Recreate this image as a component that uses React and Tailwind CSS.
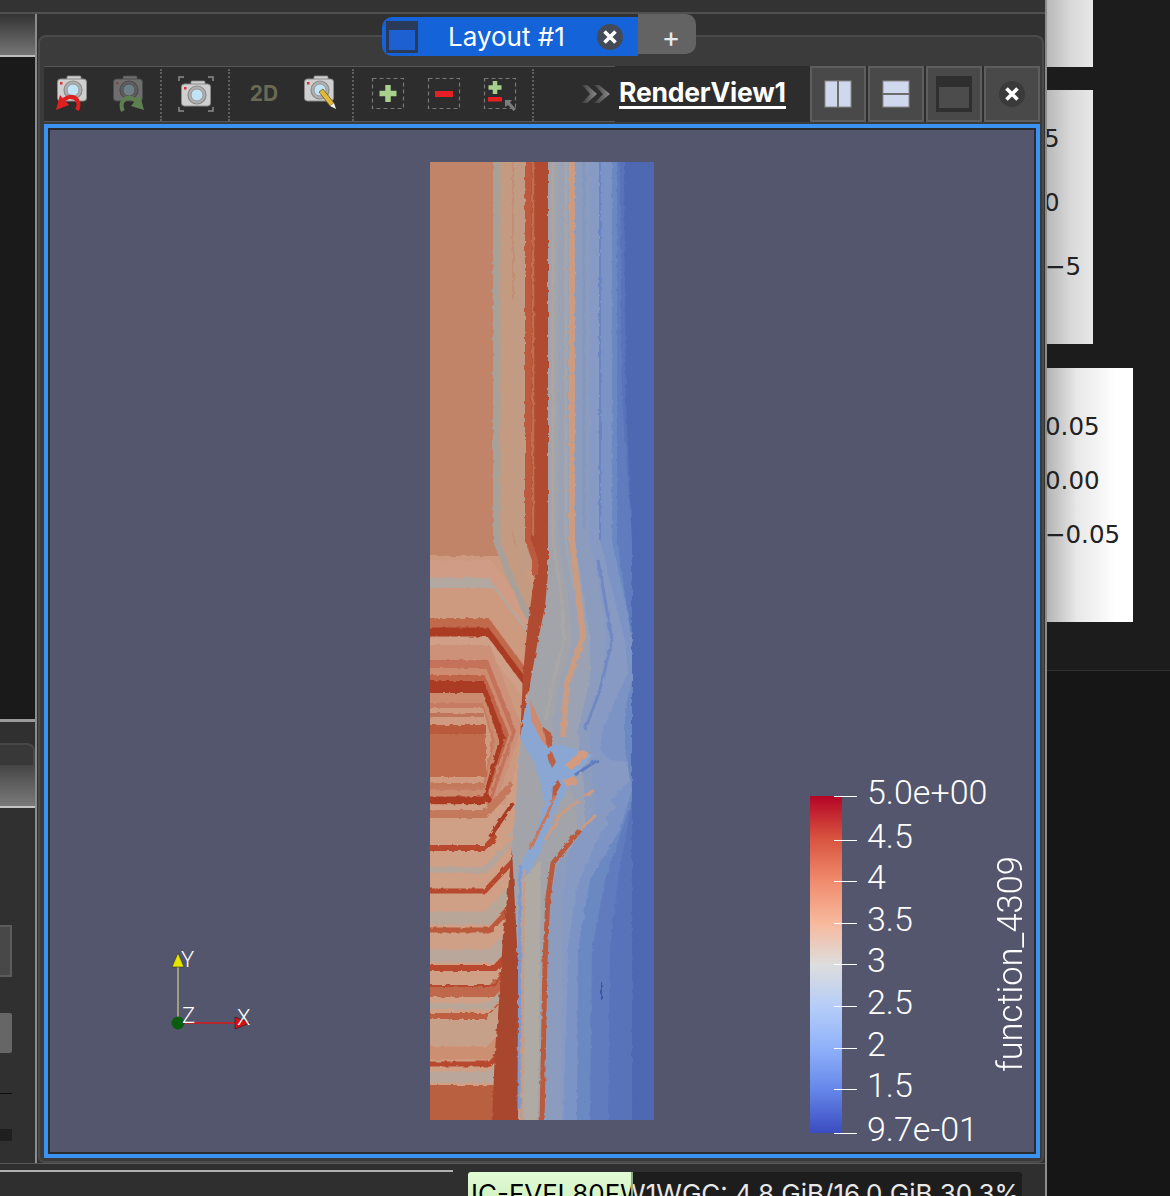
import React from "react";

// field bands of the render view, in page coordinates (x 430-654, y 162-1120)
const toRight = (pts) => pts.map((p) => p.join(",")).join(" ") + " 660,1125 660,155";

const rightBands = [
  { c: "#a2a4aa", p: [[548,155],[548,573],[545,607],[538,640],[532,673],[528,697],[524,720],[518,760],[516,800],[512,850],[520,1000],[520,1125]] },
  { c: "#9aa2b4", p: [[558,155],[558,540],[568,600],[572,640],[560,680],[552,720],[556,760],[575,800],[578,830],[552,865],[547,900],[544,963],[541,1125]] },
  { c: "#8b9cbe", p: [[575,155],[575,540],[590,640],[590,680],[578,730],[585,800],[585,830],[557,865],[551,897],[548,963],[545,1125]] },
  { c: "#869ac3", p: [[590,155],[590,540],[605,620],[605,680],[590,730],[595,810],[570,850],[563,900],[561,1125]] },
  { c: "#7c93c6", p: [[600,155],[600,540],[615,600],[625,640],[628,673],[617,697],[603,730],[600,750],[610,760],[630,762],[630,780],[610,800],[617,807],[605,817],[608,823],[597,840],[577,887],[568,947],[567,997],[563,1125]] },
  { c: "#6a88c2", p: [[612,155],[612,540],[625,600],[632,640],[632,680],[625,710],[625,750],[632,790],[620,830],[590,880],[578,950],[577,1125]] },
  { c: "#607cbe", p: [[617,155],[617,540],[632,640],[632,800],[605,880],[592,950],[590,1125]] },
  { c: "#5873b9", p: [[620,155],[622,400],[632,540],[632,800],[618,880],[610,950],[608,1125]] },
  { c: "#4f67b2", p: [[624,155],[626,400],[632,540],[632,1125]] },
];

const upperStripes = [
  [569, 18, "#d09c85"], [583, 11, "#b2a89f"], [603, 30, "#cd9a7f"],
  [623, 10, "#c16a4c"], [632, 9, "#ab3a22"], [641, 8, "#cf9f88"],
];

const lowerStripes = [
  [814, 8, "#c4785c", 485], [848, 6, "#b8492f", 485], [870, 6, "#b5a59a", 485],
  [891, 5, "#b8492f", 485], [918, 13, "#b8a698", 488], [930, 5, "#bc5a3c", 490],
  [956, 13, "#b9a79b", 492], [968, 6, "#b8492f", 495], [991, 12, "#c0674b", 492],
  [986, 2, "#b8492f", 492], [1006, 6, "#b8a698", 490], [1016, 6, "#bf5f43", 490],
  [1033, 26, "#c7a08a", 490], [1053, 13, "#cd8f72", 490], [1064, 5, "#b8492f", 490],
  [1077, 11, "#b9a79b", 490],
];

const chevrons = [
  [645, 820, 490, 522, "#cc9178"], [660, 812, 488, 516, "#c4735a"],
  [668, 808, 486, 512, "#cd8b70"], [675, 804, 485, 509, "#c0654a"],
  [681, 804, 484, 505, "#ab3a22"], [693, 797, 483, 499, "#cc8a6e"],
  [703, 790, 483, 495, "#c67c60"], [708, 785, 483, 492, "#cf9a80"],
];

function Field() {
  return (
    <svg viewBox="430 162 224 958" className="absolute left-[380px] top-[32px] h-[958px] w-[224px]">
      <defs>
        <filter id="rough" x="400" y="130" width="290" height="1020" filterUnits="userSpaceOnUse">
          <feTurbulence type="fractalNoise" baseFrequency="0.17" numOctaves="2" seed="4" />
          <feDisplacementMap in="SourceGraphic" scale="3.5" />
          <feGaussianBlur stdDeviation="0.7" />
        </filter>
        <clipPath id="plotClip">
          <rect x="430" y="162" width="224" height="958" />
        </clipPath>
      </defs>
      <g clipPath="url(#plotClip)">
        <g filter="url(#rough)">
          <rect x="420" y="150" width="240" height="420" fill="#c18469" />
          <rect x="420" y="556" width="240" height="260" fill="#cd9a80" />
          <rect x="420" y="805" width="240" height="320" fill="#cf9f86" />

          {upperStripes.map(([y, w, c]) => (
            <polyline key={y} points={`420,${y} 486,${y} 535,${y + 66}`} fill="none" stroke={c} strokeWidth={w} />
          ))}

          {/* columns on top that bend into the red band */}
          <polyline points="497,150 497,540 508,570 530,618" fill="none" stroke="#a9a199" strokeWidth="8" />
          <polyline points="507,150 507,540 518,570 533,605" fill="none" stroke="#c49a80" strokeWidth="13" />
          <polyline points="519,150 519,530 528,570" fill="none" stroke="#c29b84" strokeWidth="12" />
          <polyline points="513,162 513,300" fill="none" stroke="#c58a6e" strokeWidth="1.5" />

          {chevrons.map(([t, b, bx, tip, c]) => (
            <polygon key={t} points={`420,${t} ${bx},${t} ${tip},${(t + b) / 2 - 5} ${bx},${b} 420,${b}`} fill={c} />
          ))}
          <rect x="420" y="713" width="64" height="4" fill="#c0745a" />
          <rect x="420" y="725" width="66" height="52" fill="#c06c4e" />
          <rect x="420" y="725" width="66" height="9" fill="#b95a3e" />
          <rect x="420" y="783" width="64" height="5" fill="#c4785c" />

          {/* chevrons running up to the wedge */}
          <rect x="420" y="805" width="90" height="320" fill="#cf9f86" />
          {lowerStripes.map(([y, w, c, bx]) => (
            <polyline key={y} points={`420,${y} ${bx},${y} ${bx + 28},${y - 30}`} fill="none" stroke={c} strokeWidth={w} />
          ))}
          <polyline points="420,800 484,800 490,797" fill="none" stroke="#ab3a22" strokeWidth="7" />
          <rect x="420" y="1085" width="74" height="40" fill="#b8603f" />

          <polygon points="520,745 537,765 537,800 514,838 505,848 492,830 508,800 515,770" fill="#cf9f85" />
          <polyline points="524,752 530,775 526,805 510,838" fill="none" stroke="#b8a698" strokeWidth="4" />
          <polyline points="513,803 490,837" fill="none" stroke="#ab3a22" strokeWidth="4" />

          <polygon points="512,848 516,900 519,1000 518,1125 492,1125 495,1050 500,990 503,935 508,890" fill="#a9472e" />

          {rightBands.map((b) => (
            <polygon key={b.c} points={toRight(b.p)} fill={b.c} />
          ))}

          <polyline points="600,162 600,540" fill="none" stroke="#6a84c4" strokeWidth="2" />
          <polyline points="584,162 584,530" fill="none" stroke="#8497bf" strokeWidth="3" />
          <polyline points="553,162 553,540 562,600 564,640 552,685 546,720" fill="none" stroke="#aaa7a6" strokeWidth="3" />
          <polyline points="566,162 566,540 574,590" fill="none" stroke="#a3a6ae" strokeWidth="3" />
          <polyline points="598,560 612,640 600,690 585,730" fill="none" stroke="#7089c4" strokeWidth="3" />

          <polyline points="572,150 572,540 583,637 567,683 563,737" fill="none" stroke="#cb9b82" strokeWidth="6" />

          {/* central red band */}
          <polygon points="525,150 525,540 533,557 535,573 528,623 523,673 522,697 520,740 526,700 532,673 538,640 545,607 548,573 548,150" fill="#b04c32" />
          <polyline points="528,150 528,540 535,560 535,575" fill="none" stroke="#bd5a3d" strokeWidth="6" />
          <polyline points="533,162 533,535" fill="none" stroke="#c46c50" strokeWidth="2.5" />

          {/* blue wedge where the stripes meet */}
          <polygon points="527,700 520,738 533,760 540,780 545,805 533,840 518,870 524,880 542,850 555,812 572,780 592,755 562,745 545,745 533,715" fill="#8aa7d4" />
          <polygon points="530,700 543,728 552,745 548,748 541,740 531,720" fill="#cf8b70" />
          <polygon points="543,727 551,733 553,745 548,748" fill="#bb5b40" />
          <polygon points="547,755 552,752 556,762 552,768" fill="#bd6244" />
          <polygon points="565,765 582,750 589,753 572,770" fill="#d39b80" />
          <polygon points="553,785 558,780 561,785 555,795 552,800" fill="#bd5a3c" />
          <polygon points="563,780 575,777 578,782 567,787" fill="#d29a80" />
          <polyline points="555,795 547,815 537,835 530,850" fill="none" stroke="#c8795c" strokeWidth="3" />
          <polyline points="578,800 560,815 545,840" fill="none" stroke="#cf9a80" strokeWidth="3" />
          <polyline points="594,790 584,797" fill="none" stroke="#cf9a80" strokeWidth="3" />
          <polyline points="598,760 590,765 575,775" fill="none" stroke="#5f7cc0" strokeWidth="3" />
          <polyline points="596,815 575,835 562,850" fill="none" stroke="#cb9a82" strokeWidth="3" />

          {/* long lines down the lower half */}
          <polyline points="580,830 553,863 548,897 545,963 542,1125" fill="none" stroke="#bc5a3c" strokeWidth="5" />
          <polygon points="522,880 541,860 538,1125 522,1125" fill="#b0aaa5" />
          <polyline points="524,868 522,1125" fill="none" stroke="#cd9a80" strokeWidth="2" />
          <polyline points="520,865 519,1110" fill="none" stroke="#7f9ad0" strokeWidth="3" />
          <polyline points="602,982 602,1000" fill="none" stroke="#3f55aa" strokeWidth="2" />
        </g>
      </g>
    </svg>
  );
}

function OrientationAxes() {
  return (
    <svg width="100" height="90" viewBox="0 0 100 90" className="absolute left-[100px] top-[815px]">
      <line x1="28" y1="78" x2="28" y2="20" stroke="#d8d080" strokeWidth="1.2" />
      <polygon points="28,8 22,22 34,22" fill="#e6e600" stroke="#33331a" strokeWidth="0.6" />
      <line x1="28" y1="78" x2="88" y2="78" stroke="#d81818" strokeWidth="1.5" />
      <polygon points="100,78 85,72 85,84" fill="#d81010" stroke="#331111" strokeWidth="0.6" />
      <circle cx="28" cy="78" r="6.5" fill="#0c5c10" />
      <text x="31" y="22" fontSize="22" fill="#fff" fontFamily="Roboto, sans-serif" fontWeight="300">Y</text>
      <text x="32" y="78" fontSize="22" fill="#fff" fontFamily="Roboto, sans-serif" fontWeight="300">Z</text>
      <text x="87" y="80" fontSize="22" fill="#fff" fontFamily="Roboto, sans-serif" fontWeight="300">X</text>
    </svg>
  );
}

const ticks = [
  { y: 796, text: 792, label: "5.0e+00" },
  { y: 840, text: 836, label: "4.5" },
  { y: 881, text: 877, label: "4" },
  { y: 923, text: 919, label: "3.5" },
  { y: 964, text: 960, label: "3" },
  { y: 1006, text: 1002, label: "2.5" },
  { y: 1048, text: 1044, label: "2" },
  { y: 1089, text: 1085, label: "1.5" },
  { y: 1133, text: 1129, label: "9.7e-01" },
];

function Legend() {
  return (
    <>
      <div className="absolute left-[760px] top-[666px] h-[337px] w-[32px] bg-[linear-gradient(to_bottom,#b40426_0%,#d8533f_12.5%,#f08a6c_25%,#f8b89c_37.5%,#dddddd_50%,#b5cdf8_62.5%,#8fb1fa_75%,#6485e8_87.5%,#3b4cc0_100%)]" />
      {ticks.map((t) => (
        <React.Fragment key={t.label}>
          <div className="absolute left-[784px] h-px w-[23px] bg-white" style={{ top: t.y - 130 }} />
          <div
            className="absolute left-[817px] -translate-y-1/2 font-['Roboto',sans-serif] text-[34px] leading-none font-light text-white"
            style={{ top: t.text - 130 }}
          >
            {t.label}
          </div>
        </React.Fragment>
      ))}
      <div className="absolute left-[942px] top-[726px] rotate-180 font-['Roboto',sans-serif] text-[34.5px] leading-[36px] font-light text-white [writing-mode:vertical-rl]">
        function_4309
      </div>
    </>
  );
}

function CameraBody({ x = 5, y = 5, dim = false }) {
  const body = dim ? "#6e6e6e" : "#cfcfcf";
  const ring = dim ? "#4b4b4b" : "#8a8a8a";
  const glass = dim ? "#6f7f88" : "#c2e2f6";
  return (
    <g transform={`translate(${x} ${y})`}>
      <rect x="10" y="0" width="14" height="4" rx="1" fill={body} stroke={ring} strokeWidth="0.8" />
      <rect x="0.5" y="3" width="29" height="22" rx="3" fill={body} stroke={ring} strokeWidth="1" />
      <rect x="3" y="6" width="2.5" height="2.5" fill={dim ? "#7a4a4a" : "#d83030"} />
      <circle cx="16" cy="14" r="9" fill={dim ? "#5e5e5e" : "#b0b0b0"} stroke={ring} strokeWidth="1.2" />
      <circle cx="16" cy="14" r="6" fill={glass} stroke={ring} strokeWidth="0.8" />
    </g>
  );
}

function IconShell({ children }) {
  return (
    <svg width="44" height="44" viewBox="0 0 44 44">
      {children}
    </svg>
  );
}

function CameraUndo() {
  return (
    <IconShell>
      <CameraBody x={7} y={4} />
      <path d="M27 38 C31 30 26 24 19 25 L13 28" fill="none" stroke="#e02020" strokeWidth="4" />
      <polygon points="6,38 10,23 19,33" fill="#e02020" />
    </IconShell>
  );
}

function CameraRedo() {
  return (
    <IconShell>
      <CameraBody x={7} y={4} dim />
      <path d="M17 39 C13 31 18 25 25 26 L31 29" fill="none" stroke="#5f7f50" strokeWidth="4" />
      <polygon points="38,38 34,23 25,34" fill="#5f7f50" />
    </IconShell>
  );
}

function CameraFrame() {
  return (
    <IconShell>
      <path d="M5 9 V5 H10 M34 5 H39 V9 M5 35 V39 H10 M34 39 H39 V35" fill="none" stroke="#8c8c8c" strokeWidth="1.5" />
      <CameraBody x={7} y={9} />
    </IconShell>
  );
}

function CameraPencil() {
  return (
    <IconShell>
      <CameraBody x={6} y={4} />
      <polygon points="21,20 25,17 36,31 32,34" fill="#e2b93b" stroke="#6a5a20" strokeWidth="0.8" />
      <polygon points="32,34 36,31 38,37" fill="#f2f2f2" />
    </IconShell>
  );
}

function DashedBox({ children }) {
  return (
    <svg width="44" height="44" viewBox="0 0 44 44">
      <rect x="6.5" y="6.5" width="31" height="30" fill="none" stroke="#777" strokeWidth="1.2" strokeDasharray="4 3" />
      {children}
    </svg>
  );
}

function ToolSep() {
  return <div className="mt-[2px] mr-[6px] ml-1 h-[52px] w-[2px] border-l-2 border-dotted border-[#5f5f5f]" />;
}

function ToolBtn({ children }) {
  return <div className="flex h-full w-14 items-center justify-center">{children}</div>;
}

function TabClose({ size = "h-[26px] w-[26px]", tone = "bg-[#444b57]" }) {
  return (
    <div className={`flex items-center justify-center rounded-full ${size} ${tone}`}>
      <svg width="16" height="16" viewBox="0 0 16 16">
        <path d="M2.5 2.5 L13.5 13.5 M13.5 2.5 L2.5 13.5" stroke="#fff" strokeWidth="3.6" />
      </svg>
    </div>
  );
}

function ViewBtn({ children }) {
  return (
    <div className="flex h-14 w-14 items-center justify-center border-2 border-[#5e5e5e] bg-[#494949]">{children}</div>
  );
}

function Toolbar() {
  return (
    <div className="flex h-14 bg-[#2d2d2d]">
      <div className="flex w-[571px] items-center border-y border-[#565656]">
        <ToolBtn><CameraUndo /></ToolBtn>
        <ToolBtn><CameraRedo /></ToolBtn>
        <ToolSep />
        <ToolBtn><CameraFrame /></ToolBtn>
        <ToolSep />
        <ToolBtn>
          <span className="font-['Inter',sans-serif] text-[21px] font-bold text-[#6a6a54]">2D</span>
        </ToolBtn>
        <ToolBtn><CameraPencil /></ToolBtn>
        <ToolSep />
        <ToolBtn>
          <DashedBox>
            <path d="M22 13 V30 M13.5 21.5 H30.5" stroke="#a8d08d" strokeWidth="5.5" />
          </DashedBox>
        </ToolBtn>
        <ToolBtn>
          <DashedBox>
            <rect x="13" y="19" width="18" height="6" fill="#e42024" />
          </DashedBox>
        </ToolBtn>
        <ToolBtn>
          <DashedBox>
            <path d="M17 9 V22 M10.5 15.5 H23.5" stroke="#a8d08d" strokeWidth="4.5" />
            <rect x="10" y="25" width="14" height="4.5" fill="#e42024" />
            <polygon points="27,28 34,28 32,30.5 38,37 35.5,39 30,33 27,35" fill="#7c7c7c" />
          </DashedBox>
        </ToolBtn>
        <ToolSep />
        <svg width="30" height="20" viewBox="0 0 30 20" className="ml-[41px]">
          <defs>
            <linearGradient id="chev" x1="0" x2="1" y1="0" y2="0">
              <stop offset="0" stopColor="#3c3c3c" />
              <stop offset="1" stopColor="#8c8c8c" />
            </linearGradient>
          </defs>
          <path d="M1 1 L6 1 L16 10 L6 19 L1 19 L9 10 Z" fill="url(#chev)" />
          <path d="M13 1 L18 1 L29 10 L18 19 L13 19 L22 10 Z" fill="url(#chev)" />
        </svg>
      </div>
      <div className="flex flex-1 items-center pl-[4px]">
        <span className="border-b-[3px] border-white font-['Inter',sans-serif] text-[26.5px] leading-[27px] font-bold tracking-[-0.2px] text-white">
          RenderView1
        </span>
      </div>
      <div className="flex gap-[2px]">
        <ViewBtn>
          <svg width="28" height="28" viewBox="0 0 28 28">
            <rect x="1" y="1" width="26" height="26" fill="#d0d8ee" stroke="#8a8a8a" strokeWidth="1" />
            <rect x="13" y="1" width="2" height="26" fill="#6c6c6c" />
          </svg>
        </ViewBtn>
        <ViewBtn>
          <svg width="28" height="28" viewBox="0 0 28 28">
            <rect x="1" y="1" width="26" height="26" fill="#d0d8ee" stroke="#8a8a8a" strokeWidth="1" />
            <rect x="1" y="13" width="26" height="2" fill="#6c6c6c" />
          </svg>
        </ViewBtn>
        <ViewBtn>
          <svg width="36" height="36" viewBox="0 0 36 36">
            <rect x="0" y="0" width="36" height="36" fill="#2f2f2f" />
            <rect x="3" y="11" width="30" height="21" fill="#4c4c4c" />
          </svg>
        </ViewBtn>
        <ViewBtn>
          <TabClose size="h-[26px] w-[26px]" tone="bg-[#3a3a3a]" />
        </ViewBtn>
      </div>
    </div>
  );
}

function TabBar() {
  return (
    <div className="absolute top-0 left-[345px] flex items-start">
      <div className="mt-[3px] flex h-[39px] w-[256px] items-center rounded-l-[10px] bg-[#1463d8] pl-[4px]">
        <div className="h-[32px] w-[32px] border-[3px] border-t-[9px] border-[#2b3a58] bg-[#1c60d2]" />
        <span className="ml-[30px] w-[133px] font-['Inter',sans-serif] text-[26px] text-white">Layout #1</span>
        <div className="ml-[16px]"><TabClose /></div>
      </div>
      <div className="flex h-[40px] w-[58px] items-center justify-center rounded-r-[10px] bg-[#636363] pt-[6px] pl-[8px]">
        <span className="font-['Inter',sans-serif] text-[28px] leading-none text-[#e8e8e8]">+</span>
      </div>
    </div>
  );
}

function LeftPanel() {
  return (
    <div className="flex w-[35px] flex-col">
      <div className="h-[41px] bg-[linear-gradient(to_bottom,#333333,#767676)]" />
      <div className="h-[2px] bg-[#bdbdbd]" />
      <div className="h-[662px] bg-[#1a1a1a]" />
      <div className="h-[3px] bg-[#9a9a9a]" />
      <div className="flex flex-1 flex-col bg-[#303030]">
        <div className="mt-[21px] h-[22px] rounded-tr-[8px] border-t-2 border-r-2 border-[#474747] bg-[#383838]" />
        <div className="h-[41px] bg-[linear-gradient(to_bottom,#464646,#7a7a7a)]" />
        <div className="h-[2px] bg-[#c4c4c4]" />
        <div className="mt-[117px] h-[52px] w-[12px] border-2 border-l-0 border-[#5c5c5c] bg-[#484848]" />
        <div className="mt-[36px] h-[40px] w-[12px] rounded-r-[2px] bg-[#666666]" />
        <div className="mt-[40px] h-px w-[12px] bg-[#0c0c0c]" />
        <div className="mt-[35px] h-[12px] w-[12px] bg-[#1f1f1f]" />
      </div>
    </div>
  );
}

function RightPanel() {
  const mono = "font-['DejaVu_Sans',sans-serif] text-[24.5px] leading-none text-[#222]";
  return (
    <div className="flex w-[123px] flex-col overflow-hidden bg-[#1c1c1c]">
      <div className="h-[67px] w-[46px] bg-[linear-gradient(to_right,#b8b8b8,#d8d8d8_50%,#e8e8e8)]" />
      <div className="mt-[23px] flex h-[254px] w-[46px] flex-col gap-[44px] overflow-hidden bg-[linear-gradient(to_right,#b8b8b8,#d8d8d8_50%,#e8e8e8)] pt-[37px]">
        <span className={`-ml-[3px] h-[20px] ${mono}`}>5</span>
        <span className={`-ml-[3px] h-[20px] ${mono}`}>0</span>
        <span className={`-ml-[2px] h-[20px] ${mono}`}>−5</span>
      </div>
      <div className="mt-[24px] flex h-[254px] w-[86px] flex-col gap-[34px] overflow-hidden bg-[linear-gradient(to_right,#b4b4b4,#e8e8e8_35%,#ffffff_80%)] pt-[47px]">
        <span className={`-ml-[2px] h-[20px] ${mono}`}>0.05</span>
        <span className={`-ml-[2px] h-[20px] ${mono}`}>0.00</span>
        <span className={`-ml-[2px] h-[20px] ${mono}`}>−0.05</span>
      </div>
      <div className="mt-[48px] flex-1 border-t border-[#303030] bg-[#161616]" />
    </div>
  );
}

function StatusBar() {
  const memText = "font-['Inter',sans-serif] text-[26px] leading-[32px] whitespace-nowrap";
  return (
    <div className="flex h-[33px] overflow-hidden border-t border-[#585858] bg-[#2f2f2f]">
      <div className="w-[453px] pt-[6px]">
        <div className="h-[2px] bg-[#b0b0b0]" />
      </div>
      <div className="relative mt-[8px] ml-[15px] h-[40px] w-[554px] overflow-hidden rounded-t-[3px] bg-[#1d1d1d]">
        <div className={`pt-[6px] pl-[3px] text-[#e8e8e8] ${memText}`}>IC-FVFL80FW1WGC: 4.8 GiB/16.0 GiB 30.3%</div>
        <div className="absolute top-0 left-0 h-full w-[165px] overflow-hidden border-r-2 border-[#8ea985] bg-[linear-gradient(to_bottom,#e2fbd6,#cdeebc)]">
          <div className={`pt-[6px] pl-[3px] text-black ${memText}`}>IC-FVFL80FW1WGC: 4.8 GiB/16.0 GiB 30.3%</div>
        </div>
      </div>
    </div>
  );
}

export default function App() {
  return (
    <div className="flex h-[1196px] w-[1170px] overflow-hidden bg-[#2f2f2f]">
      <div className="flex w-[1045px] flex-col">
        <div className="h-[14px] border-b-2 border-[#505050] bg-[#333333]" />
        <div className="flex h-[1149px]">
          <LeftPanel />
          <div className="w-[2px] bg-[#8c8c8c]" />
          <div className="relative flex-1 bg-[#313131]">
            <div className="mx-px mt-[21px] flex h-[1128px] flex-col rounded-t-[8px] rounded-b-[6px] border-2 border-[#4a4a4a] bg-[#3b3b3b] pt-[29px] pr-[2px] pl-[4px]">
              <Toolbar />
              <div className="mt-[2px] h-[1034px] border-4 border-[#3a93f2]">
                <div className="h-full border-2 border-[#2b2b2b]">
                  <div className="relative h-full bg-[#53566d]">
                    <Field />
                    <OrientationAxes />
                    <Legend />
                  </div>
                </div>
              </div>
            </div>
            <TabBar />
          </div>
        </div>
        <StatusBar />
      </div>
      <div className="w-[2px] bg-[#8c8c8c]" />
      <RightPanel />
    </div>
  );
}
